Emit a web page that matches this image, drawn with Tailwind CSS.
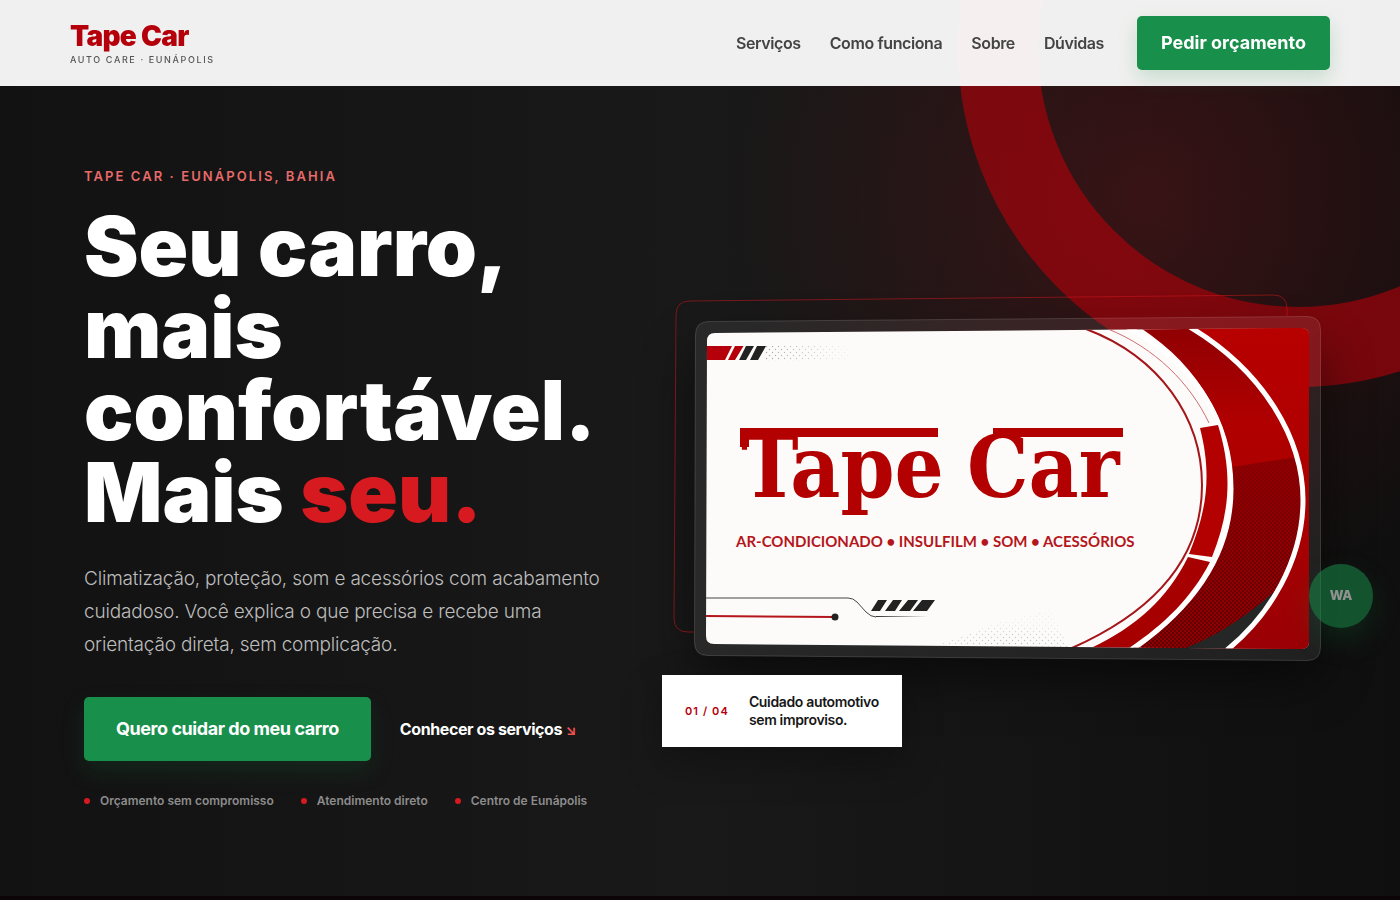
<!DOCTYPE html>
<html lang="pt-BR">
<head>
    <meta charset="UTF-8">
    <meta name="viewport" content="width=device-width, initial-scale=1.0">
    <title>Tape Car · Eunápolis</title>
    <script src="https://cdn.jsdelivr.net/npm/@tailwindcss/browser@4"></script>
</head>
<body class="bg-[#0c0407] font-['Inter',sans-serif] antialiased">
    <!-- Header -->
    <header class="fixed inset-x-0 top-0 z-20 bg-[#fefefe]/94">
        <div class="flex h-[86px] items-center justify-between px-[70px]">
            <a href="#inicio" class="flex flex-col pt-px">
                <span class="text-[28px] leading-8 font-black tracking-tight text-[#b5000b]">Tape Car</span>
                <span class="text-[9px] leading-4 font-medium tracking-[0.18em] text-[#555]">AUTO CARE · EUNÁPOLIS</span>
            </a>
            <nav class="flex items-center gap-[29px] text-base font-semibold tracking-tight text-[#444]">
                <a href="#servicos">Serviços</a>
                <a href="#como-funciona">Como funciona</a>
                <a href="#sobre">Sobre</a>
                <a href="#duvidas">Dúvidas</a>
                <button type="button" class="ml-1 h-[54px] rounded-[5px] bg-[#188f4b] px-6 text-lg font-bold tracking-normal text-white shadow-[0_8px_20px_rgba(24,143,75,0.2)]">Pedir orçamento</button>
            </nav>
        </div>
    </header>

    <!-- Hero -->
    <main id="inicio" class="relative flex min-h-[896px] items-center overflow-hidden bg-linear-to-r from-[#121212] via-[#191919] to-[#0f0f0f] pt-[86px] pb-[7px]">
        <div class="absolute inset-0 bg-[radial-gradient(circle_at_82%_22%,rgba(190,20,28,0.22),transparent_420px)]"></div>
        <div class="absolute -top-[293px] -right-[238px] size-[680px] rounded-full border-80 border-[#b80008]/58"></div>

        <div class="relative grid w-full grid-cols-[53fr_67fr] items-center gap-12 pr-[68px] pl-[84px]">
            <div>
                <p class="text-[13px] leading-5 font-semibold tracking-[0.16em] text-[#e86a6a]">TAPE CAR · EUNÁPOLIS, BAHIA</p>
                <h1 class="mt-5 text-[82px] leading-[82px] font-black text-white">Seu carro, mais confortável. Mais <span class="text-[#d71920]">seu.</span></h1>
                <p class="mt-7 text-[19px] leading-[33px] font-light tracking-[-0.01em] text-[#bdbdbd]">Climatização, proteção, som e acessórios com acabamento cuidadoso. Você explica o que precisa e recebe uma orientação direta, sem complicação.</p>
                <div class="mt-9 flex items-center gap-[29px]">
                    <button type="button" class="h-16 rounded-[5px] bg-[#188f4b] px-8 text-lg font-bold tracking-tight whitespace-nowrap text-white shadow-[0_10px_24px_rgba(24,143,75,0.16)]">Quero cuidar do meu carro</button>
                    <a href="#servicos" class="text-base font-bold tracking-tight whitespace-nowrap text-white">Conhecer os serviços <span class="text-sm text-[#f0524f]">↘</span></a>
                </div>
                <ul class="mt-8 flex gap-[27px] text-xs font-semibold whitespace-nowrap text-[#8c8c8c]">
                    <li class="flex items-center gap-[10px]"><span class="size-[6px] rounded-full bg-[#d71920]"></span>Orçamento sem compromisso</li>
                    <li class="flex items-center gap-[10px]"><span class="size-[6px] rounded-full bg-[#d71920]"></span>Atendimento direto</li>
                    <li class="flex items-center gap-[10px]"><span class="size-[6px] rounded-full bg-[#d71920]"></span>Centro de Eunápolis</li>
                </ul>
            </div>

            <div class="relative">
                <!-- Brand card -->
                <svg viewBox="662 286 670 404" class="w-full overflow-visible" role="img" aria-label="Tape Car">
                    <defs>
                        <clipPath id="art"><path d="M715 333 L1301 328 Q1309 328 1309 336 L1309 641 Q1309 649 1301 649 L714 644 Q706 644 706 636 L707 341 Q707 333 715 333Z"/></clipPath>
                        <clipPath id="around"><path clip-rule="evenodd" d="M500 150H1500V850H500Z M707 321 L1307 316 Q1321 316 1321 330 V647 Q1321 661 1307 661 L708 656 Q694 656 694 642 L695 335 Q695 321 707 321Z"/></clipPath>
                        <pattern id="dots" width="6" height="6" patternUnits="userSpaceOnUse"><circle cx="1.5" cy="1.5" r="0.7" fill="#999"/><circle cx="4.5" cy="4.5" r="0.7" fill="#999"/></pattern>
                        <pattern id="mesh" width="4" height="4" patternUnits="userSpaceOnUse"><circle cx="1" cy="1" r="0.8" fill="#1c0002"/><circle cx="3" cy="3" r="0.8" fill="#1c0002"/></pattern>
                        <linearGradient id="fadeRight"><stop offset="0" stop-color="#fff"/><stop offset="1" stop-color="#000"/></linearGradient>
                        <radialGradient id="fadeOut" cx="0.6" cy="1" r="0.7"><stop offset="0" stop-color="#ddd"/><stop offset="1" stop-color="#222"/></radialGradient>
                        <linearGradient id="fadeDown" x2="0" y2="1"><stop offset="0" stop-color="#222"/><stop offset="1" stop-color="#fff"/></linearGradient>
                        <linearGradient id="band" x2="0" y2="1"><stop offset="0" stop-color="#8d0003"/><stop offset="0.3" stop-color="#b00000"/><stop offset="1" stop-color="#a80000"/></linearGradient>
                        <linearGradient id="corner" x2="0" y2="1"><stop offset="0" stop-color="#b80000"/><stop offset="0.5" stop-color="#ad0000"/><stop offset="1" stop-color="#980006"/></linearGradient>
                        <linearGradient id="tail"><stop offset="0" stop-color="#333"/><stop offset="1" stop-color="#333" stop-opacity="0"/></linearGradient>
                        <mask id="dotsTop"><rect x="755" y="340" width="100" height="30" fill="url(#fadeRight)"/></mask>
                        <mask id="dotsBottom"><path d="M925 650 L1000 622 L1050 610 L1070 650Z" fill="url(#fadeOut)"/></mask>
                        <mask id="meshMask"><rect x="1100" y="450" width="220" height="210" fill="url(#fadeDown)"/></mask>
                        <filter id="soft" x="-30%" y="-30%" width="160%" height="160%"><feGaussianBlur stdDeviation="26"/></filter>
                    </defs>

                    <g clip-path="url(#around)">
                        <rect x="694" y="350" width="627" height="330" rx="14" fill="#000" opacity="0.5" filter="url(#soft)"/>
                        <path d="M690 301 L1273 295 Q1287 295 1287 309 L1288 619 Q1288 637 1274 637 L688 632 Q674 632 674 618 L676 315 Q676 301 690 301Z" fill="none" stroke="#d71920" stroke-opacity="0.5"/>
                    </g>
                    <path d="M709 321.500 L1307 316.500 Q1320.500 316.500 1320.500 330 V647 Q1320.500 660.500 1307 660.500 L708 655.500 Q694.500 655.500 694.500 642 L695.500 335 Q695.500 321.500 709 321.500Z" fill="#fff" fill-opacity="0.07" stroke="#fff" stroke-opacity="0.14"/>

                    <g clip-path="url(#art)">
                        <rect x="700" y="320" width="620" height="340" fill="#fdfbfa"/>
                        <path d="M1128 320 C1196 360 1233 420 1233 489 C1233 560 1190 610 1132 655 L1320 655 V320Z" fill="url(#band)"/>
                        <!-- Mesh fabric -->
                        <path d="M1233 467 L1290 458 L1310 458 V560 L1268 598 Q1220 640 1180 650 H1130 C1190 608 1233 560 1233 489Z" fill="#8f0003"/>
                        <path d="M1233 467 L1290 458 L1310 458 V560 L1268 598 Q1220 640 1180 650 H1130 C1190 608 1233 560 1233 489Z" fill="url(#mesh)" mask="url(#meshMask)"/>
                        <path d="M1274 592 Q1226 634 1180 650 H1230 Q1260 624 1280 592Z" fill="#252626"/>
                        <!-- Corner and arcs -->
                        <path d="M1190 327 C1265 372 1303 440 1303 500 C1303 560 1270 615 1227 650 L1320 660 V320Z" fill="url(#corner)"/>
                        <path d="M1190 327 C1265 372 1303 440 1303 500 C1303 560 1270 615 1227 650" fill="none" stroke="#fff" stroke-width="5"/>
                        <path d="M1124 325 C1194 362 1231 420 1231 489 C1231 558 1190 610 1130 651" fill="none" stroke="#fff" stroke-width="5"/>
                        <path d="M1200 428 L1218 425 C1232 470 1231 510 1212 557 L1189 554 C1207 510 1212 475 1200 428Z" fill="#b30000"/>
                        <path d="M1188 557 L1210 562 C1192 597 1165 624 1129 648 H1091 C1136 627 1168 598 1188 557Z" fill="#a60000"/>
                        <path d="M1086 329 C1160 357 1202 418 1202 485 C1202 560 1153 612 1072 648" fill="none" stroke="#a5161b" stroke-width="2"/>
                        <path d="M1108 329 C1155 348 1190 383 1209 423" fill="none" stroke="#cf6d70"/>

                        <!-- Upper left marks -->
                        <path d="M706 346 H732 L725 360 H706Z M735 346 H743.500 L735 360 H728Z" fill="#b5000b"/>
                        <path d="M746 346 H754 L746 360 H739Z M757 346 H766 L758 360 H750Z" fill="#222"/>
                        <rect x="764" y="346" width="92" height="15" fill="url(#dots)" mask="url(#dotsTop)"/>

                        <!-- Lower left lines -->
                        <path d="M706 598 H848 Q853 598 857 602 L866 612 Q871 617 876 617" fill="none" stroke="#444"/>
                        <rect x="876" y="616" width="52" height="1" fill="url(#tail)"/>
                        <path d="M706 616 L835 617" stroke="#b5161b" stroke-width="2"/>
                        <circle cx="835" cy="617" r="3.500" fill="#222"/>
                        <path d="M878 600 H887 L880 611 H871Z M893 600 H902 L895 611 H885Z M908 600 H918 L910 611 H899Z M922 600 H935 L927 611 H913Z" fill="#222"/>
                        <rect x="920" y="605" width="160" height="45" fill="url(#dots)" mask="url(#dotsBottom)"/>

                        <!-- Wordmark -->
                        <path d="M740 428 H938 V437 H749 V447 H740Z M993 428 H1123 V437 H993Z" fill="#b30000"/>
                        <g fill="#b30000" font-family="'DejaVu Serif Condensed','DejaVu Serif',serif" font-weight="700" font-size="86">
                            <text x="741" y="497">Tape</text>
                            <text x="967" y="497">Car</text>
                        </g>
                        <text x="736" y="547" font-family="Lato, sans-serif" font-weight="700" font-size="15" fill="#b5161b">AR-CONDICIONADO • INSULFILM • SOM • ACESSÓRIOS</text>
                    </g>
                </svg>

                <div class="absolute top-[96%] left-0 mt-0.5 flex items-center gap-5 bg-white px-[23px] py-[18px] shadow-[0_16px_40px_rgba(0,0,0,0.3)]">
                    <span class="text-[11px] font-semibold tracking-widest whitespace-nowrap text-[#b5000b]">01 / 04</span>
                    <p class="text-sm leading-[18px] font-semibold tracking-tight whitespace-nowrap text-[#171717]">Cuidado automotivo<br>sem improviso.</p>
                </div>
            </div>
        </div>
    </main>

    <!-- WhatsApp -->
    <button type="button" class="fixed right-[27px] bottom-[272px] z-10 size-16 rounded-full bg-[#188f4b] text-[13px] font-extrabold text-white opacity-55 shadow-[0_12px_30px_rgba(24,143,75,0.35)]">WA</button>
</body>
</html>
